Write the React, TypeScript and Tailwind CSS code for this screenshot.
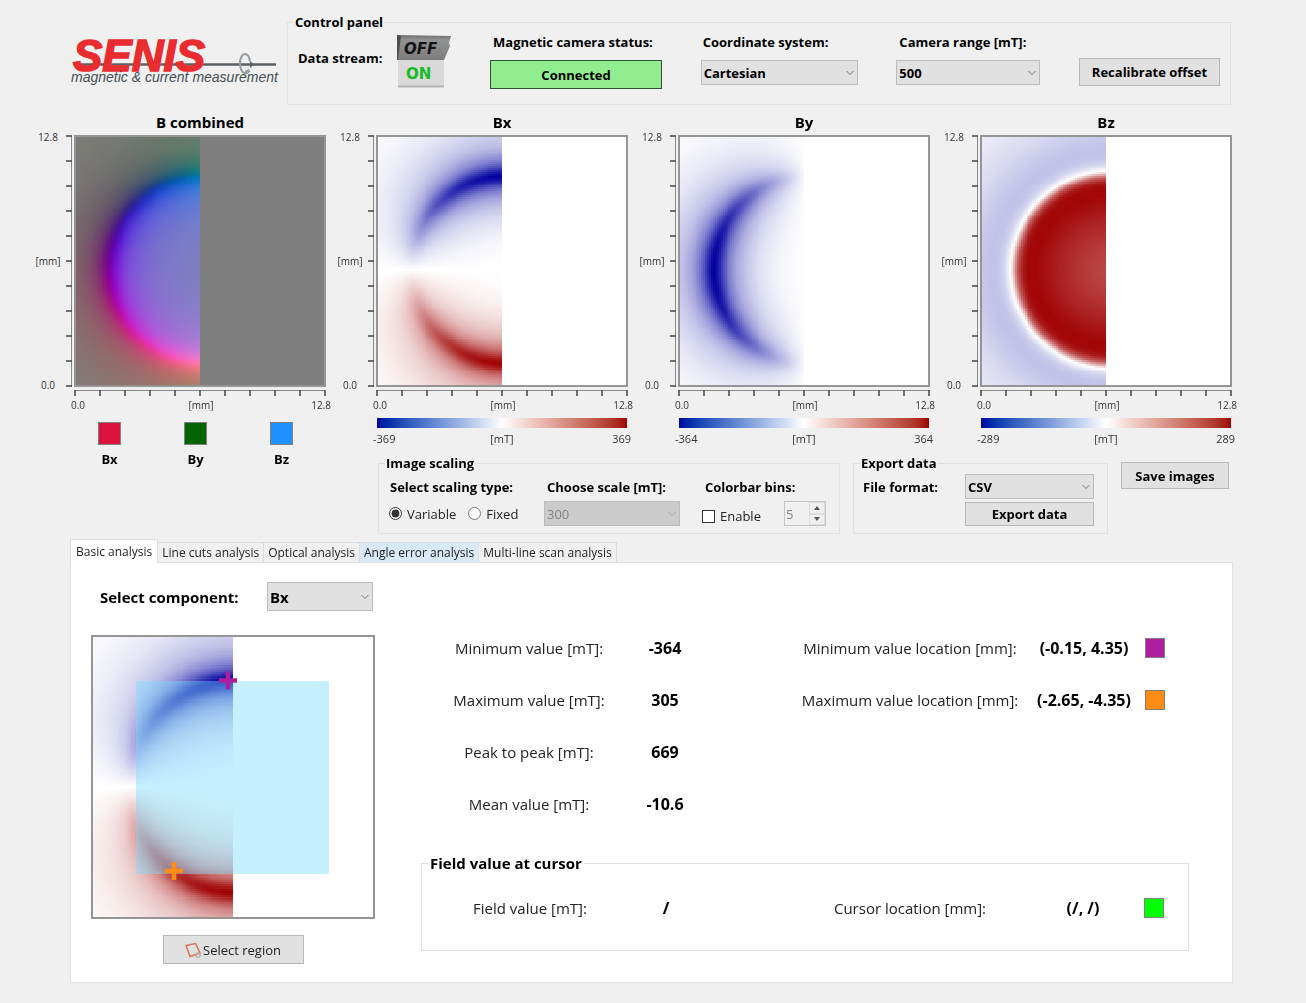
import { useEffect, useRef, useState } from "react";
import type { ReactNode } from "react";

type Kind = "combined" | "bx" | "by" | "bz";
type Knot = [number, number];

const CELLS = 128;
const CENTER = { x: 0.514, y: 0.535 };

// Field profiles of the round magnet, as [distance from centre, relative value]
const radial: Knot[] = [
  [0, 0], [0.08, 0.02], [0.14, 0.06], [0.2, 0.13], [0.25, 0.23], [0.29, 0.36],
  [0.32, 0.53], [0.34, 0.7], [0.36, 0.9], [0.37, 0.97], [0.378, 1], [0.386, 0.97],
  [0.4, 0.85], [0.42, 0.64], [0.44, 0.49], [0.47, 0.35], [0.5, 0.26], [0.54, 0.19],
  [0.6, 0.11], [0.7, 0.04], [0.8, 0.01],
];
const axial: Knot[] = [
  [0, 0.72], [0.08, 0.76], [0.14, 0.81], [0.2, 0.87], [0.25, 0.93], [0.3, 0.98],
  [0.33, 0.97], [0.35, 0.9], [0.37, 0.66], [0.38, 0.43], [0.39, 0.18], [0.398, 0],
  [0.41, -0.08], [0.425, -0.17], [0.45, -0.23], [0.48, -0.24], [0.53, -0.21],
  [0.6, -0.15], [0.7, -0.09], [0.8, -0.06],
];

function sample(knots: Knot[], r: number) {
  for (let i = 1; i < knots.length; i++) {
    const [r0, v0] = knots[i - 1];
    const [r1, v1] = knots[i];
    if (r <= r1) return v0 + ((v1 - v0) * (r - r0)) / (r1 - r0);
  }
  return knots[knots.length - 1][1];
}

function diverging(v: number) {
  const t = Math.min(Math.abs(v), 1);
  const fade = 255 * (1 - t);
  const main = 255 - 95 * t;
  return v < 0 ? [fade, fade, main] : [main, fade, fade];
}

function fieldColor(kind: Kind, col: number, row: number) {
  // Only the left half of the sensor is covered
  if (col >= CELLS / 2) return kind === "combined" ? [127, 127, 127] : [255, 255, 255];
  const dx = (col + 0.5) / CELLS - CENTER.x;
  const dy = (row + 0.5) / CELLS - CENTER.y;
  const r = Math.hypot(dx, dy) || 0.001;
  const br = sample(radial, r);
  const bx = (br * dy) / r;
  const by = (br * dx) / r;
  const bz = sample(axial, r);
  if (kind === "bx") return diverging(bx);
  if (kind === "by") return diverging(by);
  if (kind === "bz") return diverging(bz);
  return [127 + 125 * bx, 127 + 127 * by, 127 + 90 * bz];
}

function FieldMap({ kind, className }: { kind: Kind; className: string }) {
  const ref = useRef<HTMLCanvasElement>(null);

  useEffect(() => {
    const ctx = ref.current?.getContext("2d");
    if (!ctx) return;
    const image = ctx.createImageData(CELLS, CELLS);
    for (let row = 0; row < CELLS; row++) {
      for (let col = 0; col < CELLS; col++) {
        const [r, g, b] = fieldColor(kind, col, row);
        image.data.set([r, g, b, 255], (row * CELLS + col) * 4);
      }
    }
    ctx.putImageData(image, 0, 0);
  }, [kind]);

  return (
    <canvas
      ref={ref}
      width={CELLS}
      height={CELLS}
      className={`border-2 border-[#959595] [image-rendering:pixelated] ${className}`}
    />
  );
}

const ticks = [0, 25, 50, 75, 100, 125, 150, 175, 200, 225, 250];

function Plot({ title, kind, children }: { title: string; kind: Kind; children: ReactNode }) {
  return (
    <section className="text-[10px] leading-4 text-[#333]">
      <h2 className="mb-[3px] ml-10 w-[252px] text-center text-[15px] leading-5 font-bold text-black">
        {title}
      </h2>
      <div className="flex">
        <div className="-my-[6px] mr-1 flex w-7 flex-col justify-between text-center">
          <span>12.8</span>
          <span>[mm]</span>
          <span>0.0</span>
        </div>
        <svg width="8" height="252" className="shrink-0">
          <path d="M5.5 1V252" stroke="#8a8a8a" />
          {ticks.map((t) => (
            <path key={t} d={`M0 ${t + 1}H6`} stroke="#444" strokeWidth="1.5" />
          ))}
        </svg>
        <FieldMap kind={kind} className="h-[252px] w-[252px]" />
      </div>
      <svg width="252" height="7" className="mt-[2px] ml-10 block">
        <path d="M0 1.5H251" stroke="#8a8a8a" />
        {ticks.map((t) => (
          <path key={t} d={`M${t + 1} 1V7`} stroke="#444" strokeWidth="1.5" />
        ))}
      </svg>
      <div className="mt-px ml-[37px] grid w-[260px] grid-cols-3">
        <span>0.0</span>
        <span className="text-center">[mm]</span>
        <span className="text-right">12.8</span>
      </div>
      {children}
    </section>
  );
}

function Colorbar({ limit }: { limit: number }) {
  return (
    <div className="ml-[37px] w-[258px] text-[11px]">
      <div className="mx-1 mt-[5px] h-[10px] bg-linear-to-r from-[#0000a0] via-white to-[#a00000]" />
      <div className="mt-[3px] grid grid-cols-3">
        <span>-{limit}</span>
        <span className="text-center">[mT]</span>
        <span className="text-right">{limit}</span>
      </div>
    </div>
  );
}

function Dropdown({ id, options, className, disabled = false }: {
  id: string;
  options: string[];
  className: string;
  disabled?: boolean;
}) {
  return (
    <div className={`relative ${className}`}>
      <select
        id={id}
        disabled={disabled}
        className="h-full w-full appearance-none border border-[#bcbcbc] bg-[#e1e1e1] pl-[2px] font-bold text-black disabled:bg-[#cccccc] disabled:font-normal disabled:text-[#838383] disabled:opacity-100"
      >
        {options.map((option) => (
          <option key={option}>{option}</option>
        ))}
      </select>
      <svg viewBox="0 0 8 5" className="pointer-events-none absolute top-1/2 right-1 h-[5px] w-2 -translate-y-1/2">
        <path d="M0.5 0.5L4 4L7.5 0.5" fill="none" stroke={disabled ? "#a8a8a8" : "#777"} />
      </svg>
    </div>
  );
}

function Logo() {
  return (
    <svg width="206" height="54" viewBox="0 0 206 54" role="img" aria-label="SENIS magnetic & current measurement" className="overflow-visible">
      <path d="M2 29.5H204" stroke="#5b6064" strokeWidth="2.5" />
      <text x="1" y="36" fill="#e92c30" stroke="#e92c30" strokeWidth="1.6" className="font-['Liberation_Sans',sans-serif] text-[44px] font-bold italic">
        SENIS
      </text>
      <ellipse cx="173" cy="28.5" rx="5" ry="9.5" fill="none" stroke="#989da1" strokeWidth="2" strokeDasharray="38 9" strokeDashoffset="-6" />
      <path d="M178 26l4 3.5l-4 3.500z" fill="#5b6064" />
      <path d="M173 35l6 1l-5 4z" fill="#989da1" />
      <text x="-1" y="47" fill="#454f54" className="font-['Liberation_Sans',sans-serif] text-[14px] italic">
        magnetic &amp; current measurement
      </text>
    </svg>
  );
}

function StreamSwitch() {
  const [on, setOn] = useState(true);
  return (
    <button type="button" role="switch" aria-checked={on} aria-label="Data stream" onClick={() => setOn(!on)}>
      <svg width="54" height="54" viewBox="0 0 54 54" className="block">
        <defs>
          <linearGradient id="off-face" x1="0" y1="0" x2="0" y2="1">
            <stop offset="0" stopColor="#6f6f6f" />
            <stop offset="0.2" stopColor="#929292" />
            <stop offset="1" stopColor="#7c7c7c" />
          </linearGradient>
        </defs>
        <path d="M1 25H47V53H1z" fill="#d9d9d9" />
        <path d="M1 51.500H47V53.500H1z" fill="#b3b3b3" />
        <path d="M0 1L54 2L52 9L53 12L47 26H0z" fill="url(#off-face)" />
        <path d="M0 1L4 2L1 26H0z" fill="#4e4e4e" />
        <text x="7" y="20" fill="#141414" className="font-['DejaVu_Sans',sans-serif] text-[15px] font-bold italic">
          OFF
        </text>
        <text x="9" y="45" fill={on ? "#17b927" : "#8b8b8b"} className="font-['DejaVu_Sans',sans-serif] text-[15px] font-bold">
          ON
        </text>
      </svg>
    </button>
  );
}

const legend = [
  { name: "Bx", swatch: "bg-[#dc143c]" },
  { name: "By", swatch: "bg-[#006400]" },
  { name: "Bz", swatch: "bg-[#1e90ff]" },
];

const tabs = [
  "Basic analysis",
  "Line cuts analysis",
  "Optical analysis",
  "Angle error analysis",
  "Multi-line scan analysis",
];

const stats = [
  { label: "Minimum value [mT]:", value: "-364", place: "Minimum value location [mm]:", at: "(-0.15, 4.35)", swatch: "bg-[#ae1f9f]" },
  { label: "Maximum value [mT]:", value: "305", place: "Maximum value location [mm]:", at: "(-2.65, -4.35)", swatch: "bg-[#ff8c14]" },
  { label: "Peak to peak [mT]:", value: "669" },
  { label: "Mean value [mT]:", value: "-10.6" },
];

type Reading = { label: string; value: string; place?: string; at?: string; swatch?: string };

function ReadingRow({ label, value, place, at, swatch }: Reading) {
  return (
    <div className="grid h-[52px] grid-cols-[216px_56px_1fr_108px_51px] items-center text-center">
      <span>{label}</span>
      <strong className="text-[16px] text-black">{value}</strong>
      {place && (
        <>
          <span className="pl-[97px] whitespace-nowrap">{place}</span>
          <strong className="text-[16px] whitespace-nowrap text-black">{at}</strong>
          <span className={`ml-[7px] h-5 w-5 border border-[#808080] ${swatch}`} />
        </>
      )}
    </div>
  );
}

export default function App() {
  const [tab, setTab] = useState(tabs[0]);

  return (
    <main className="min-h-screen bg-[#f0f0f0] pb-5 font-['Open_Sans','Noto_Sans',sans-serif] text-[13px] leading-5 text-[#222]">
      <header className="flex items-start gap-[9px] pt-[14px] pr-[75px] pl-[72px]">
        <div className="mt-[21px] shrink-0">
          <Logo />
        </div>
        <fieldset className="h-[91px] flex-1 border border-[#e0e0e0] px-[10px]">
          <legend className="-ml-1 px-[1px] leading-4 font-bold text-black">Control panel</legend>
          <div className="flex items-start justify-between pt-[2px] font-bold text-black">
            <div className="mt-[2px] flex items-start gap-[15px]">
              <span className="mt-[14px] whitespace-nowrap">Data stream:</span>
              <StreamSwitch />
            </div>
            <div className="w-[172px]">
              <p className="pl-[3px] whitespace-nowrap">Magnetic camera status:</p>
              <output className="mt-2 block h-[29px] border border-[#2f4f2f] bg-[#90ee90] text-center leading-7">
                Connected
              </output>
            </div>
            <div className="w-[157px]">
              <label htmlFor="coords" className="pl-[2px]">Coordinate system:</label>
              <Dropdown id="coords" options={["Cartesian", "Cylindrical"]} className="mt-2 h-[25px]" />
            </div>
            <div className="w-[144px]">
              <label htmlFor="range" className="pl-[3px]">Camera range [mT]:</label>
              <Dropdown id="range" options={["500", "1000"]} className="mt-2 h-[25px]" />
            </div>
            <button type="button" className="mt-[26px] h-7 w-[141px] border border-[#b8b8b8] bg-[#e1e1e1]">
              Recalibrate offset
            </button>
          </div>
        </fieldset>
      </header>

      <div className="mt-[7px] grid grid-cols-4 gap-y-2 pr-16 pl-[34px]">
        <div className="row-span-2">
          <Plot title="B combined" kind="combined">
            <ul className="mt-[9px] ml-16 flex w-[195px] justify-between text-[13px] font-bold text-black">
              {legend.map((item) => (
                <li key={item.name} className="flex flex-col items-center gap-[6px]">
                  <span className={`h-[23px] w-[23px] border border-[#808080] ${item.swatch}`} />
                  {item.name}
                </li>
              ))}
            </ul>
          </Plot>
        </div>
        <Plot title="Bx" kind="bx">
          <Colorbar limit={369} />
        </Plot>
        <Plot title="By" kind="by">
          <Colorbar limit={364} />
        </Plot>
        <Plot title="Bz" kind="bz">
          <Colorbar limit={289} />
        </Plot>

        <div className="col-span-3 ml-[42px] flex items-start gap-[13px]">
          <fieldset className="h-[79px] w-[462px] border border-[#e0e0e0] px-[10px]">
            <legend className="-ml-1 px-[1px] leading-4 font-bold text-black">Image scaling</legend>
            <div className="flex pt-[6px]">
              <div role="radiogroup" aria-label="Select scaling type" className="w-[155px]">
                <p className="pl-px font-bold text-black">Select scaling type:</p>
                <div className="mt-1 flex h-[25px] items-center gap-3">
                  <label className="flex items-center gap-[5px]">
                    <input type="radio" name="scaling" defaultChecked className="m-0 h-[13px] w-[13px] accent-[#333]" />
                    Variable
                  </label>
                  <label className="flex items-center gap-[5px]">
                    <input type="radio" name="scaling" className="m-0 h-[13px] w-[13px] accent-[#333]" />
                    Fixed
                  </label>
                </div>
              </div>
              <div className="w-[158px]">
                <label htmlFor="scale" className="pl-[3px] font-bold text-black">Choose scale [mT]:</label>
                <Dropdown id="scale" options={["300"]} disabled className="mt-1 h-[25px] w-[136px]" />
              </div>
              <div className="w-[124px]">
                <label htmlFor="bins" className="pl-[3px] font-bold whitespace-nowrap text-black">Colorbar bins:</label>
                <div className="mt-1 flex items-start justify-between">
                  <label className="mt-[5px] flex items-center gap-[5px]">
                    <input type="checkbox" className="m-0 h-[13px] w-[13px] appearance-none border border-[#333] bg-white checked:bg-[#333]" />
                    Enable
                  </label>
                  <div className="flex h-[25px] w-[42px] border border-[#c4c4c4]">
                    <input id="bins" type="text" inputMode="numeric" defaultValue="5" disabled className="w-6 pl-px text-[#838383]" />
                    <div className="flex flex-1 flex-col text-[#555]">
                      <button type="button" disabled aria-label="More bins" className="flex flex-1 items-center justify-center border border-[#dcdcdc]">
                        <svg width="6" height="4"><path d="M0 4L3 0L6 4z" fill="currentColor" /></svg>
                      </button>
                      <button type="button" disabled aria-label="Fewer bins" className="flex flex-1 items-center justify-center border border-[#dcdcdc]">
                        <svg width="6" height="4"><path d="M0 0L3 4L6 0z" fill="currentColor" /></svg>
                      </button>
                    </div>
                  </div>
                </div>
              </div>
            </div>
          </fieldset>

          <fieldset className="h-[79px] w-[255px] border border-[#e0e0e0] pr-[13px] pl-[9px] font-bold text-black">
            <legend className="-ml-[3px] px-[1px] leading-4">Export data</legend>
            <div className="flex items-start justify-between pt-[3px]">
              <label htmlFor="format" className="mt-[3px]">File format:</label>
              <div className="w-[129px]">
                <Dropdown id="format" options={["CSV", "TXT"]} className="h-[25px]" />
                <button type="button" className="mt-[3px] h-6 w-full border border-[#b8b8b8] bg-[#e1e1e1]">
                  Export data
                </button>
              </div>
            </div>
          </fieldset>

          <button type="button" className="mt-[7px] h-[27px] w-[108px] border border-[#b8b8b8] bg-[#e1e1e1] font-bold whitespace-nowrap text-black">
            Save images
          </button>
        </div>
      </div>

      <div className="mt-[5px] pr-[73px] pl-[70px]">
        <div role="tablist" className="flex items-end text-[12px]">
          {tabs.map((name) => (
            <button
              key={name}
              type="button"
              role="tab"
              aria-selected={tab === name}
              onClick={() => setTab(name)}
              className="h-5 border-t border-r border-[#dcdcdc] px-1 leading-5 whitespace-nowrap hover:bg-[#d8e9f9] aria-selected:-mb-px aria-selected:h-6 aria-selected:border-l aria-selected:bg-white aria-selected:px-[5px] nth-4:bg-[#d8e9f9]"
            >
              {name}
            </button>
          ))}
        </div>

        <div role="tabpanel" aria-label={tab} className="flex border border-[#e0e0e0] bg-white pt-[19px] pb-[18px] pl-5 text-[15px]">
          <div className="w-[284px]">
            <div className="flex items-center justify-between pr-[2px] pl-[9px]">
              <label htmlFor="component" className="font-bold text-black">Select component:</label>
              <Dropdown id="component" options={["Bx", "By", "Bz"]} className="h-[29px] w-[106px]" />
            </div>
            <div className="relative mt-6">
              <FieldMap kind="bx" className="block h-[284px] w-[284px]" />
              <svg viewBox="0 0 284 284" className="absolute inset-0 h-[284px] w-[284px]">
                <rect x="45" y="46" width="193" height="193" fill="#7adcff" fillOpacity="0.43" />
                <path d="M128 45.500H146M137 36.500V54.500" stroke="#ae1f9f" strokeWidth="4.500" />
                <path d="M74 236H92M83 227V245" stroke="#ff8c14" strokeWidth="4.500" />
              </svg>
            </div>
            <button type="button" className="mx-auto mt-4 flex h-[29px] w-[141px] items-center justify-center gap-[2px] border border-[#b8b8b8] bg-[#e1e1e1] text-[13px]">
              <svg width="16" height="16" viewBox="0 0 16 16" fill="none">
                <path d="M1 3.500L10.500 1.500L15 11L5 14.500z" stroke="#e0734f" strokeWidth="1.500" />
                <circle cx="13" cy="13" r="2.200" stroke="#b4b4b4" strokeWidth="1.300" />
              </svg>
              Select region
            </button>
          </div>

          <div className="mr-[43px] ml-[46px] flex-1 pt-10">
            {stats.map((item) => (
              <ReadingRow key={item.label} {...item} />
            ))}
            <fieldset className="mt-[23px] h-[98px] border border-[#e0e0e0]">
              <legend className="ml-[6px] px-[2px] leading-5 font-bold text-black">Field value at cursor</legend>
              <div className="pt-[9px]">
                <ReadingRow label="Field value [mT]:" value="/" place="Cursor location [mm]:" at="(/, /)" swatch="bg-[#00ff00]" />
              </div>
            </fieldset>
          </div>
        </div>
      </div>
    </main>
  );
}
